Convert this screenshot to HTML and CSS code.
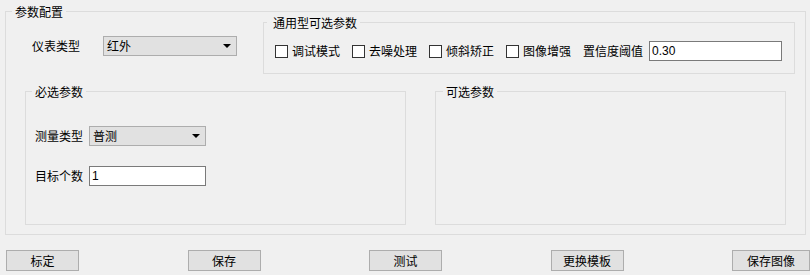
FILE: index.html
```html
<!DOCTYPE html>
<html lang="zh-CN">
<head>
    <meta charset="UTF-8">
    <title>参数配置</title>
    <link rel="stylesheet" href="styles.css">
</head>
<body>
    <div class="window">
        <fieldset class="group group-main">
            <legend>参数配置</legend>

            <div class="top-row">
                <div class="field field-meter">
                    <span class="label">仪表类型</span>
                    <div class="combo combo-meter"><span>红外</span><i class="arrow"></i></div>
                </div>

                <fieldset class="group group-common">
                    <legend>通用型可选参数</legend>
                    <div class="options">
                        <label class="check"><span class="box"></span>调试模式</label>
                        <label class="check"><span class="box"></span>去噪处理</label>
                        <label class="check"><span class="box"></span>倾斜矫正</label>
                        <label class="check"><span class="box"></span>图像增强</label>
                        <span class="label label-threshold">置信度阈值</span>
                        <input class="text-input input-threshold" type="text" value="0.30">
                    </div>
                </fieldset>
            </div>

            <div class="bottom-row">
                <fieldset class="group group-required">
                    <legend>必选参数</legend>
                    <div class="fields">
                        <div class="field">
                            <span class="label">测量类型</span>
                            <div class="combo combo-small"><span>普测</span><i class="arrow"></i></div>
                        </div>
                        <div class="field">
                            <span class="label">目标个数</span>
                            <input class="text-input input-small" type="text" value="1">
                        </div>
                    </div>
                </fieldset>

                <fieldset class="group group-optional">
                    <legend>可选参数</legend>
                </fieldset>
            </div>
        </fieldset>

        <div class="buttons">
            <button class="btn">标定</button>
            <button class="btn">保存</button>
            <button class="btn">测试</button>
            <button class="btn">更换模板</button>
            <button class="btn btn-wide">保存图像</button>
        </div>
    </div>
</body>
</html>
```

FILE: styles.css
```css
body {
    margin: 0;
    background: #f0f0f0;
    font-family: "Noto Sans CJK SC", "Liberation Sans", sans-serif;
    font-size: 12px;
    color: #000;
}

.window {
    padding-top: 5px;
}

.group {
    margin: 0;
    padding: 0;
    min-width: 0;
    border: 1px solid #dcdcdc;
    box-sizing: border-box;
}

.group legend {
    padding: 0 3px;
    margin-left: 6px;
    line-height: 13px;
    font-size: 12px;
}

.group-main {
    width: 801px;
    margin-left: 5px;
    padding-bottom: 9px;
}

.top-row {
    display: flex;
    align-items: flex-start;
    margin-top: -2px;
}

.field {
    display: flex;
    align-items: center;
}

.field-meter {
    margin-top: 20px;
    margin-left: 26px;
}

.field-meter .label {
    margin-right: 23px;
}

.label {
    line-height: 20px;
    white-space: nowrap;
}

.combo {
    height: 20px;
    box-sizing: border-box;
    border: 1px solid #adadad;
    background: #e1e1e1;
    display: flex;
    align-items: center;
    justify-content: space-between;
    padding: 0 5px 0 3px;
    line-height: 18px;
}

.combo-meter {
    width: 134px;
}

.combo-small {
    width: 117px;
}

.arrow {
    width: 0;
    height: 0;
    border-left: 4px solid transparent;
    border-right: 4px solid transparent;
    border-top: 4px solid #000;
}

.group-common {
    width: 532px;
    margin-left: 26px;
}

.group-common legend {
    margin-left: 3px;
    padding: 0 3px 0 6px;
}

.options {
    display: flex;
    align-items: center;
    padding: 12px 0 12px 11px;
}

.check {
    display: flex;
    align-items: center;
    gap: 4px;
    margin-right: 12px;
    line-height: 20px;
    white-space: nowrap;
}

.box {
    width: 13px;
    height: 13px;
    box-sizing: border-box;
    border: 1px solid #333;
    background: #fff;
}

.label-threshold {
    margin-right: 6px;
}

.text-input {
    height: 20px;
    box-sizing: border-box;
    margin: 0;
    border: 1px solid #7a7a7a;
    background: #fff;
    padding: 0 2px;
    font-family: "Liberation Sans", "Noto Sans CJK SC", sans-serif;
    font-size: 12px;
    color: #000;
    outline: none;
}

.input-threshold {
    width: 133px;
}

.input-small {
    width: 117px;
}

.bottom-row {
    display: flex;
    margin-top: 11px;
}

.group-required {
    width: 381px;
    height: 140px;
    margin-left: 19px;
}

.group-optional {
    width: 351px;
    height: 140px;
    margin-left: 29px;
}

.group-optional legend {
    margin-left: 7px;
}

.fields {
    display: flex;
    flex-direction: column;
    gap: 20px;
    padding: 28px 0 0 9px;
}

.fields .label {
    margin-right: 6px;
}

.buttons {
    display: flex;
    justify-content: space-between;
    margin-top: 15px;
    padding-left: 6px;
}

.btn {
    width: 73px;
    height: 21px;
    margin: 0;
    padding: 0;
    border: 1px solid #adadad;
    background: #e1e1e1;
    font-family: "Noto Sans CJK SC", "Liberation Sans", sans-serif;
    font-size: 12px;
    color: #000;
    line-height: 19px;
}

.btn-wide {
    width: 78px;
}
```
